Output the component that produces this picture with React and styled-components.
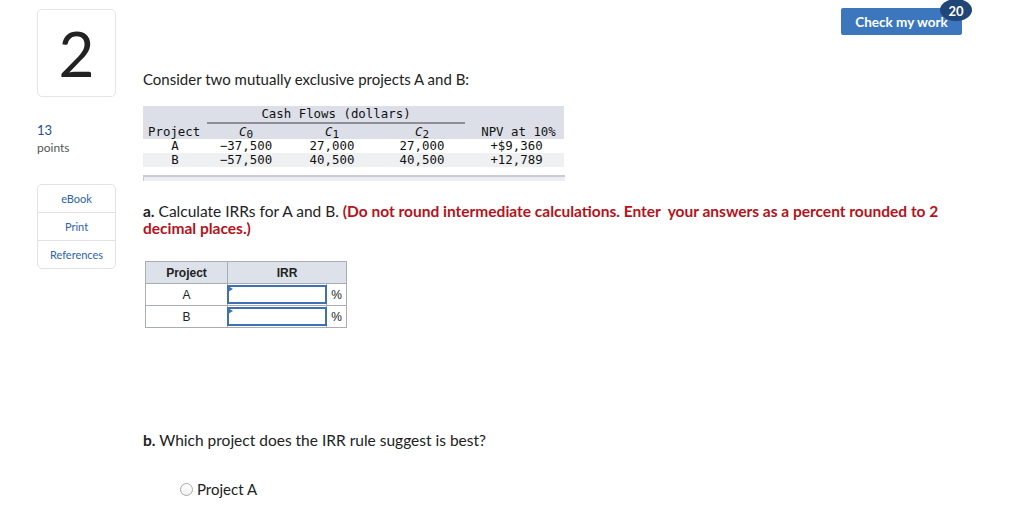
import React from 'react';
import styled, { createGlobalStyle } from 'styled-components';

const GlobalStyle = createGlobalStyle`
    body {
        margin: 0;
        background: #fff;
        font-family: Lato, "Open Sans", sans-serif;
        color: #222;
    }
`

const Page = styled.div`
    display: flex;
    width: 1024px;
    height: 506px;
    overflow: hidden;
    padding: 9px 0 0 37px;
    box-sizing: border-box;
    position: relative;
`

const Side = styled.div`
    width: 79px;
    flex-shrink: 0;
    display: flex;
    flex-direction: column;
`

const NumberBox = styled.div`
    height: 88px;
    border: 1px solid #e6e6e6;
    border-radius: 5px;
    box-sizing: border-box;
    display: flex;
    justify-content: center;
    align-items: center;
    font-size: 62px;
    font-weight: 400;
    color: #222;
`

const Points = styled.div`
    margin-top: 25px;
    font-size: 12px;
    line-height: 17px;
    color: #555;
    b {
        display: block;
        font-weight: 400;
        color: #1d4f91;
        font-size: 13px;
    }
`

const Tools = styled.div`
    margin-top: 28px;
    border: 1px solid #e3e3e3;
    border-radius: 5px;
    display: flex;
    flex-direction: column;
`

const Tool = styled.div`
    height: 27px;
    display: flex;
    justify-content: center;
    align-items: center;
    font-size: 11px;
    color: #2f63a8;
    &:not(:last-child) {
        border-bottom: 1px solid #e3e3e3;
    }
`

const Main = styled.div`
    margin-left: 27px;
    padding-top: 60px;
    display: flex;
    flex-direction: column;
    align-items: flex-start;
`

const Intro = styled.p`
    margin: 0;
    font-size: 15px;
    line-height: 20px;
`

const CashTable = styled.div`
    margin-top: 17px;
    width: 421px;
    font-family: "DejaVu Sans Mono", monospace;
    font-size: 12.4px;
    line-height: 14px;
    color: #111;
`

const Head = styled.div`
    background: #dcdfe8;
    padding-top: 1px;
`

const Grid = styled.div`
    display: grid;
    grid-template-columns: 64px 78px 94px 86px 1fr;
`

const Caption = styled.div`
    grid-column: 2 / 5;
    text-align: center;
    border-bottom: 2px solid #8c8f96;
    padding-bottom: 1px;
    margin-bottom: 1px;
`

const Cell = styled.div`
    text-align: ${(props) => props.align || 'center'};
    padding-left: ${(props) => props.indent || 0}px;
    sub {
        font-size: 11px;
        vertical-align: -2px;
        line-height: 0;
    }
`

const Row = styled(Grid)`
    background: ${(props) => (props.shade ? '#eef0f2' : '#fff')};
`

const Scroll = styled.div`
    margin-top: 8px;
    width: 421px;
    height: 4px;
    border-top: 2px solid #c9ccd2;
    border-left: 1px solid #c9ccd2;
    background: #eceef1;
`

const PartA = styled.p`
    margin: 22px 0 0;
    font-size: 15.5px;
    line-height: 17px;
    width: 800px;
    b {
        font-weight: 700;
    }
    strong {
        color: #b5121b;
        font-weight: 700;
    }
`

const IrrTable = styled.table`
    margin: 24px 0 0 2px;
    border-collapse: collapse;
    font-family: "Liberation Sans", Arial, sans-serif;
    font-size: 12px;
    th, td {
        border: 1px solid #a9acb3;
        height: 21px;
        padding: 0;
        text-align: center;
    }
    th {
        background: #dde1ea;
        font-weight: 700;
    }
`

const InputCell = styled.td`
    width: 98px;
`

const Field = styled.div`
    height: 19px;
    border: 2px solid #4070b4;
    box-sizing: border-box;
    margin: 0 -1px;
    position: relative;
    &::before {
        content: "";
        position: absolute;
        left: -1px;
        top: -1px;
        border-left: 5px solid #3f72b8;
        border-top: 3px solid transparent;
        border-bottom: 3px solid transparent;
    }
`

const Percent = styled.td`
    width: 19px;
`

const PartB = styled.p`
    margin: 103px 0 0;
    font-size: 15.5px;
    b {
        font-weight: 700;
    }
`

const Option = styled.label`
    margin: 31px 0 0 37px;
    display: flex;
    align-items: center;
    gap: 4px;
    font-size: 15px;
`

const Radio = styled.span`
    width: 13px;
    height: 13px;
    border-radius: 50%;
    border: 1px solid #aaa;
    box-sizing: border-box;
    background: linear-gradient(#fff, #f0f0f0);
`

const CheckButton = styled.button`
    position: absolute;
    top: 8px;
    left: 841px;
    width: 121px;
    height: 27px;
    border: none;
    border-radius: 2px;
    background: #3c77bd;
    color: #fff;
    font-family: Lato, sans-serif;
    font-weight: 700;
    font-size: 13.5px;
    padding: 0;
`

const Badge = styled.span`
    position: absolute;
    top: -9px;
    right: -10px;
    width: 32px;
    height: 22px;
    border-radius: 50%;
    background: #1f4677;
    color: #fff;
    font-size: 13px;
    font-weight: 700;
    display: flex;
    justify-content: center;
    align-items: flex-end;
    padding-bottom: 2px;
    box-sizing: border-box;
`

const flows = [
    { name: 'A', c0: '\u221237,500', c1: '27,000', c2: '27,000', npv: '+$9,360' },
    { name: 'B', c0: '\u221257,500', c1: '40,500', c2: '40,500', npv: '+12,789' },
]

function App() {
    return (
        <Page>
            <GlobalStyle />
            <Side>
                <NumberBox>2</NumberBox>
                <Points>
                    <b>13</b>
                    points
                </Points>
                <Tools>
                    <Tool>eBook</Tool>
                    <Tool>Print</Tool>
                    <Tool>References</Tool>
                </Tools>
            </Side>
            <Main>
                <Intro>Consider two mutually exclusive projects A and B:</Intro>
                <CashTable>
                    <Head>
                        <Grid>
                            <Caption>Cash Flows (dollars)</Caption>
                        </Grid>
                        <Grid>
                            <Cell align="left" indent={5}>Project</Cell>
                            <Cell><i>C</i><sub>0</sub></Cell>
                            <Cell><i>C</i><sub>1</sub></Cell>
                            <Cell><i>C</i><sub>2</sub></Cell>
                            <Cell indent={8}>NPV at 10%</Cell>
                        </Grid>
                    </Head>
                    {flows.map((item, i) => (
                        <Row key={item.name} shade={i === 1}>
                            <Cell>{item.name}</Cell>
                            <Cell>{item.c0}</Cell>
                            <Cell>{item.c1}</Cell>
                            <Cell>{item.c2}</Cell>
                            <Cell indent={4}>{item.npv}</Cell>
                        </Row>
                    ))}
                </CashTable>
                <Scroll />
                <PartA>
                    <b>a.</b> Calculate IRRs for A and B. <strong>(Do not round intermediate calculations. Enter&nbsp; your answers as a percent rounded to 2 decimal places.)</strong>
                </PartA>
                <IrrTable>
                    <thead>
                        <tr>
                            <th style={{ width: 81 }}>Project</th>
                            <th colSpan={2}>IRR</th>
                        </tr>
                    </thead>
                    <tbody>
                        {['A', 'B'].map((p) => (
                            <tr key={p}>
                                <td>{p}</td>
                                <InputCell><Field /></InputCell>
                                <Percent>%</Percent>
                            </tr>
                        ))}
                    </tbody>
                </IrrTable>
                <PartB>
                    <b>b.</b> Which project does the IRR rule suggest is best?
                </PartB>
                <Option>
                    <Radio />
                    Project A
                </Option>
            </Main>
            <CheckButton>
                Check my work
                <Badge>20</Badge>
            </CheckButton>
        </Page>
    )
}

export default App
